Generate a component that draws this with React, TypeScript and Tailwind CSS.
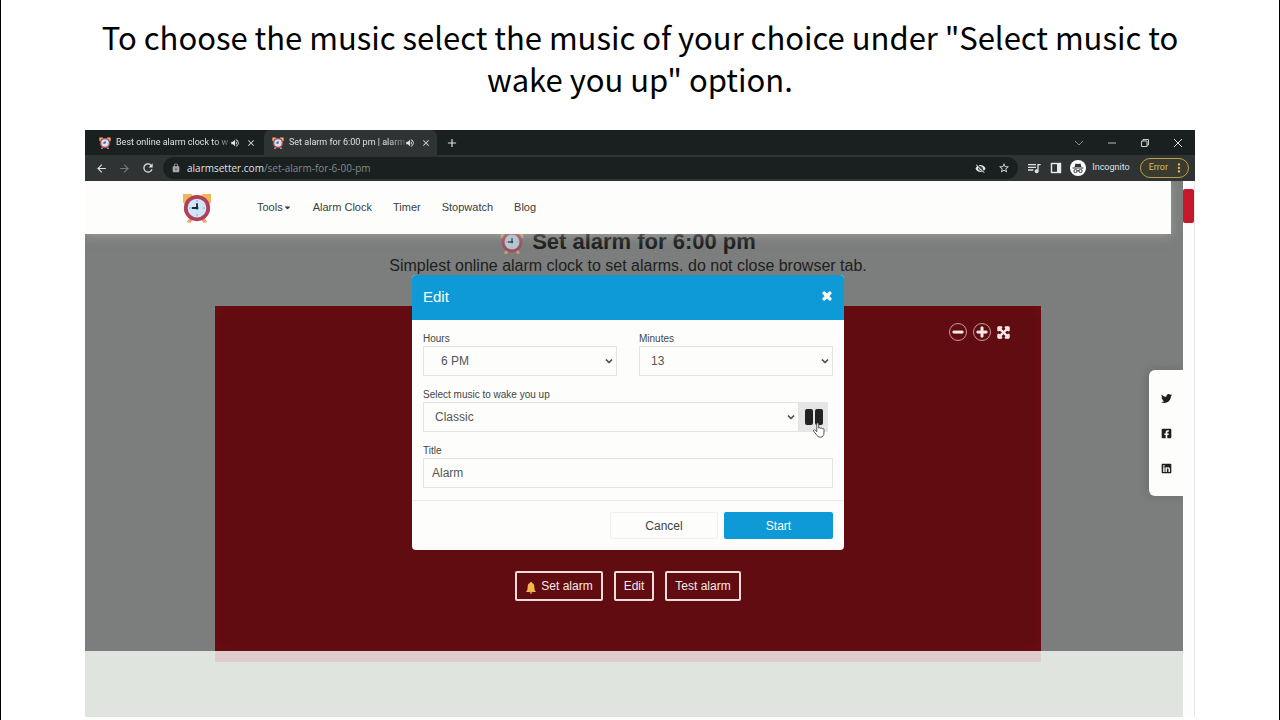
import type { ReactNode } from 'react'
import {
  FaTwitter,
  FaFacebookSquare,
  FaLinkedin,
  FaTimes,
  FaMinus,
  FaPlus,
  FaExpandArrowsAlt,
  FaCaretDown,
} from 'react-icons/fa'
import {
  MdArrowBack,
  MdArrowForward,
  MdRefresh,
  MdLock,
  MdVolumeUp,
  MdClose,
  MdAdd,
  MdVisibilityOff,
  MdStarBorder,
  MdQueueMusic,
  MdMoreVert,
} from 'react-icons/md'

const ClockIcon = ({ className }: { className: string }) => (
  <svg viewBox="0 0 32 32" className={className} aria-hidden="true">
    <path d="M1 1h9l3 4-8 8-4-3zM31 1h-9l-3 4 8 8 4-3z" fill="#f0b45a" />
    <path d="M5 31l4-6 3 3-3 4zM27 31l-4-6-3 3 3 4z" fill="#e9a878" />
    <circle cx="16" cy="16" r="14" fill="#b0405a" />
    <circle cx="16" cy="16" r="10" fill="#cfe6f7" />
    <path d="M16 7.500v2M16 22.500v2M7.500 16h2M22.500 16h2" stroke="#7f9fc0" strokeWidth="1" />
    <path d="M16 11v5h-5.500" stroke="#1c2b3c" strokeWidth="2" fill="none" />
    <circle cx="16" cy="16" r="1.600" fill="#1c2b3c" />
  </svg>
)

const BellIcon = () => (
  <svg viewBox="0 0 16 18" className="mt-1 h-3 w-3" aria-hidden="true">
    <path d="M8 0c1 0 1.600.7 1.600 1.600C12 2.300 13 4.500 13 7c0 4 .8 6 2.500 8H.5C2.200 13 3 11 3 7c0-2.500 1-4.700 3.400-5.400C6.400.7 7 0 8 0z" fill="#f2b84e" />
    <circle cx="8" cy="16" r="1.800" fill="#c98433" />
  </svg>
)

const SidePanelIcon = () => (
  <svg viewBox="0 0 12 12" className="size-3" aria-hidden="true">
    <rect x="1.500" y="1.500" width="9" height="9" fill="none" stroke="#e8eaed" strokeWidth="1.400" />
    <rect x="7" y="1" width="4" height="10" fill="#e8eaed" />
  </svg>
)

// hat and glasses
const IncognitoIcon = () => (
  <svg viewBox="0 0 16 16" className="size-4" aria-hidden="true">
    <circle cx="8" cy="8" r="8" fill="#fff" />
    <path d="M5.500 3.500l2.500.6 2.500-.6 1 3.500h-7zM2.500 7.500h11v1h-11z" fill="#2f3334" />
    <circle cx="5.500" cy="11" r="1.600" fill="none" stroke="#2f3334" />
    <circle cx="10.500" cy="11" r="1.600" fill="none" stroke="#2f3334" />
    <path d="M7 10.800h2" stroke="#2f3334" />
  </svg>
)

const HandCursor = () => (
  <svg viewBox="0 0 16 18" className="pointer-events-none absolute top-5 left-3 h-4 w-4" aria-hidden="true">
    <path
      d="M5.500 11V2.200c0-1.600 2.200-1.600 2.200 0V7c.3-1 2-.9 2.100.2.400-.9 1.900-.7 2 .5.500-.7 1.800-.4 1.800.8v3.500c0 3-1.300 5-4 5-2.300 0-3.400-.9-4.500-2.800L2 10.400c-.7-1.300.9-2.200 1.800-1.100z"
      fill="#fff"
      stroke="#444"
      strokeWidth="1"
    />
  </svg>
)

const Chevron = () => (
  <svg viewBox="0 0 8 8" className="pointer-events-none absolute top-1/2 right-1 size-2 -translate-y-1/2" aria-hidden="true">
    <path d="M1 2.500l3 3 3-3" fill="none" stroke="#444" strokeWidth="1.500" />
  </svg>
)

const Tab = ({ title, active }: { title: string; active?: boolean }) => (
  <div className={`flex w-[173px] items-center px-2 ${active ? 'rounded-t-md bg-[#2f3334]' : ''}`}>
    <ClockIcon className="mr-[5px] size-3 shrink-0" />
    <span className="flex-1 whitespace-nowrap [mask-image:linear-gradient(to_right,#000_85%,#0004)]">
      {title}
    </span>
    <MdVolumeUp className="size-[10px] shrink-0" />
    <button aria-label="Close tab" className="ml-[6px]">
      <MdClose className="size-[10px]" />
    </button>
  </div>
)

const Field = ({ id, label, children }: { id: string; label: string; children: ReactNode }) => (
  <div className="flex-1">
    <label htmlFor={id} className="block text-[10px] leading-[14px] text-[#444]">
      {label}
    </label>
    {children}
  </div>
)

const Select = ({ id, value, pad }: { id: string; value: string; pad: string }) => (
  <div className="relative flex-1">
    <select
      id={id}
      className={`block h-[30px] w-full appearance-none border border-[#e2e4e1] bg-[#fdfefb] text-xs text-[#555] ${pad}`}
    >
      <option>{value}</option>
    </select>
    <Chevron />
  </div>
)

const BrowserBar = () => (
  <header className="bg-[#1a1f20] font-[Roboto,sans-serif] text-[#dfe1e2]">
    <div className="flex h-[25px] text-[9px]">
      <div className="flex pl-[6px]">
        <Tab title="Best online alarm clock to w" />
        <Tab title="Set alarm for 6:00 pm | alarm" active />
      </div>
      <button aria-label="New tab" className="ml-2">
        <MdAdd className="size-[14px]" />
      </button>
      <div className="ml-auto flex items-center gap-[23px] pr-3">
        <svg viewBox="0 0 10 10" className="size-[10px]"><path d="M1 3l4 4 4-4" fill="none" stroke="#888" /></svg>
        <svg viewBox="0 0 10 10" className="size-[10px]"><path d="M1 5h8" stroke="#bbb" /></svg>
        <svg viewBox="0 0 10 10" className="size-[10px]">
          <path d="M1.500 3h5.500v5.500h-5.500zM3 3V1.500h5.500V7H7" fill="none" stroke="#ccc" />
        </svg>
        <svg viewBox="0 0 10 10" className="size-[10px]"><path d="M1 1l8 8M9 1l-8 8" stroke="#ddd" /></svg>
      </div>
    </div>

    <div className="flex h-[26px] items-center bg-[#2f3334] pr-[6px] pl-[10px] text-[10px]">
      <div className="flex items-center gap-[10px]">
        <MdArrowBack className="size-[13px]" />
        <MdArrowForward className="size-[13px] text-[#777b7c]" />
        <MdRefresh className="size-[14px]" />
      </div>
      <div className="ml-2 flex h-[22px] flex-1 items-center rounded-full bg-[#1a1f20] px-2 font-['Open_Sans',sans-serif]">
        <MdLock className="mr-[6px] size-[10px] text-[#a5a9aa]" />
        <span>alarmsetter.com</span>
        <span className="text-[#85898a]">/set-alarm-for-6-00-pm</span>
        <MdVisibilityOff className="mr-3 ml-auto size-[11px]" />
        <MdStarBorder className="size-3" />
      </div>
      <div className="ml-2 flex items-center gap-2 text-[9px]">
        <MdQueueMusic className="size-4" />
        <SidePanelIcon />
        <span className="flex items-center gap-[6px] pr-[2px]">
          <IncognitoIcon />
          Incognito
        </span>
        <button className="flex h-5 items-center gap-1 rounded-full border border-[#b9a24f] bg-[#3b3a2e] pr-[2px] pl-2 text-[#d8be62]">
          Error
          <MdMoreVert className="size-[14px]" />
        </button>
      </div>
    </div>
  </header>
)

const NavBar = () => (
  <nav className="relative z-10 mr-3 flex h-[53px] items-center gap-[21px] bg-[#fdfefb] pl-[97px] text-[11px] text-[#3c3c3c] shadow-[0_2px_10px_rgba(190,190,185,0.5)]">
    <ClockIcon className="mr-6 size-[30px]" />
    <a href="#tools" className="flex items-center">
      Tools
      <FaCaretDown className="size-[9px]" />
    </a>
    <a href="#clock">Alarm Clock</a>
    <a href="#timer">Timer</a>
    <a href="#stopwatch">Stopwatch</a>
    <a href="#blog">Blog</a>
  </nav>
)

const EditDialog = () => (
  <div className="absolute inset-0 z-20 flex items-start justify-center pt-[94px] pr-3">
    <div role="dialog" aria-label="Edit" className="w-[432px] overflow-hidden rounded-sm bg-[#fdfefb]">
      <div className="flex h-[45px] items-center justify-between bg-[#0e9ad6] px-[11px] text-[#fdfefb]">
        <h2 className="text-[15px]">Edit</h2>
        <button aria-label="Close" className="pb-1">
          <FaTimes className="size-3" stroke="currentColor" strokeWidth="50" />
        </button>
      </div>

      <form className="flex flex-col gap-3 px-[11px] py-3">
        <div className="flex gap-[22px]">
          <Field id="hours" label="Hours">
            <Select id="hours" value="6 PM" pad="px-[17px]" />
          </Field>
          <Field id="minutes" label="Minutes">
            <Select id="minutes" value="13" pad="px-[11px]" />
          </Field>
        </div>
        <Field id="music" label="Select music to wake you up">
          <div className="flex pr-[5px]">
            <Select id="music" value="Classic" pad="px-[11px]" />
            <button type="button" aria-label="Pause" className="relative flex w-[29px] items-center justify-center gap-[2px] bg-[#e4e5e4]">
              <span className="h-4 w-2 rounded-xs bg-[#222]" />
              <span className="h-4 w-2 rounded-xs bg-[#222]" />
              <HandCursor />
            </button>
          </div>
        </Field>
        <Field id="title" label="Title">
          <input
            id="title"
            defaultValue="Alarm"
            className="block h-[30px] w-full border border-[#e2e4e1] px-2 text-xs text-[#555]"
          />
        </Field>
      </form>

      <div className="flex justify-end gap-[6px] border-t border-[#e8eae7] px-[11px] py-[11px] text-xs">
        <button className="h-[27px] w-[108px] rounded-xs border border-[#f0f1ee] text-[#444]">Cancel</button>
        <button className="h-[27px] w-[109px] rounded-xs bg-[#0e9ad6] text-[#fdfefb]">Start</button>
      </div>
    </div>
  </div>
)

const AlarmPage = () => (
  <main className="relative overflow-hidden bg-[#7b7e7c]">
    <NavBar />
    <div className="pr-3 text-center text-[#1f2020]">
      <h1 className="flex items-center justify-center gap-2 text-[22px] leading-4 font-bold">
        <ClockIcon className="-my-1 size-6 opacity-70" />
        Set alarm for 6:00 pm
      </h1>
      <p className="text-base leading-8">Simplest online alarm clock to set alarms. do not close browser tab.</p>
    </div>

    <div className="mt-6 pr-3">
      <section className="mx-auto flex h-[345px] w-[76%] flex-col justify-between bg-[#610c11] px-[31px] pt-[17px] pb-[50px] text-[#f6e9e9] shadow-[inset_0_0_8px_#760d16]">
        <div className="flex items-center justify-end gap-[6px]">
          <button aria-label="Smaller" className="flex size-[18px] items-center justify-center rounded-full border border-[#c99a9c]">
            <FaMinus className="size-3" stroke="currentColor" strokeWidth="30" />
          </button>
          <button aria-label="Larger" className="flex size-[18px] items-center justify-center rounded-full border border-[#c99a9c]">
            <FaPlus className="size-3" stroke="currentColor" strokeWidth="30" />
          </button>
          <button aria-label="Full screen">
            <FaExpandArrowsAlt className="size-[13px]" stroke="currentColor" strokeWidth="40" />
          </button>
        </div>
        <div className="flex justify-center gap-[11px] text-xs">
          <button className="flex h-[30px] items-center gap-1 rounded-xs border-2 border-[#f3dcdc] px-2">
            <BellIcon />
            Set alarm
          </button>
          <button className="h-[30px] rounded-xs border-2 border-[#f3dcdc] px-2">Edit</button>
          <button className="h-[30px] rounded-xs border-2 border-[#f3dcdc] px-2">Test alarm</button>
        </div>
      </section>
    </div>

    <EditDialog />

    <aside className="absolute top-[189px] right-0 z-10 flex h-[126px] w-[34px] flex-col items-center justify-center gap-6 rounded-l-md bg-[#fdfefb] text-[11px] text-[#1b1f1d] shadow-[-2px_0_10px_rgba(0,0,0,0.15)]">
      <a href="#twitter" aria-label="Twitter"><FaTwitter /></a>
      <a href="#facebook" aria-label="Facebook"><FaFacebookSquare /></a>
      <a href="#linkedin" aria-label="LinkedIn"><FaLinkedin /></a>
    </aside>
  </main>
)

export default function App() {
  return (
    <div className="flex h-screen flex-col overflow-hidden border-x border-black bg-white font-['Liberation_Sans',sans-serif]">
      <p className="mx-auto max-w-[1120px] pt-4 pb-[30px] text-center font-['Noto_Sans_CJK_SC',sans-serif] text-[31px] leading-[42px] text-black">
        To choose the music select the music of your choice under "Select music to wake you up" option.
      </p>

      <div className="mx-[84px]">
        <BrowserBar />
        <div className="flex">
          <div className="min-w-0 flex-1">
            <AlarmPage />
            <div className="h-[66px] bg-[#e0e4df] pr-3">
              <div className="mx-auto h-[11px] w-[76%] bg-[#dfcccd]" />
            </div>
          </div>
          <div className="w-3 border-r border-[#e6e6e6] bg-[#fdfdfd] pt-2">
            <div className="h-[34px] rounded-xs bg-[#c5182a]" />
          </div>
        </div>
      </div>
    </div>
  )
}
